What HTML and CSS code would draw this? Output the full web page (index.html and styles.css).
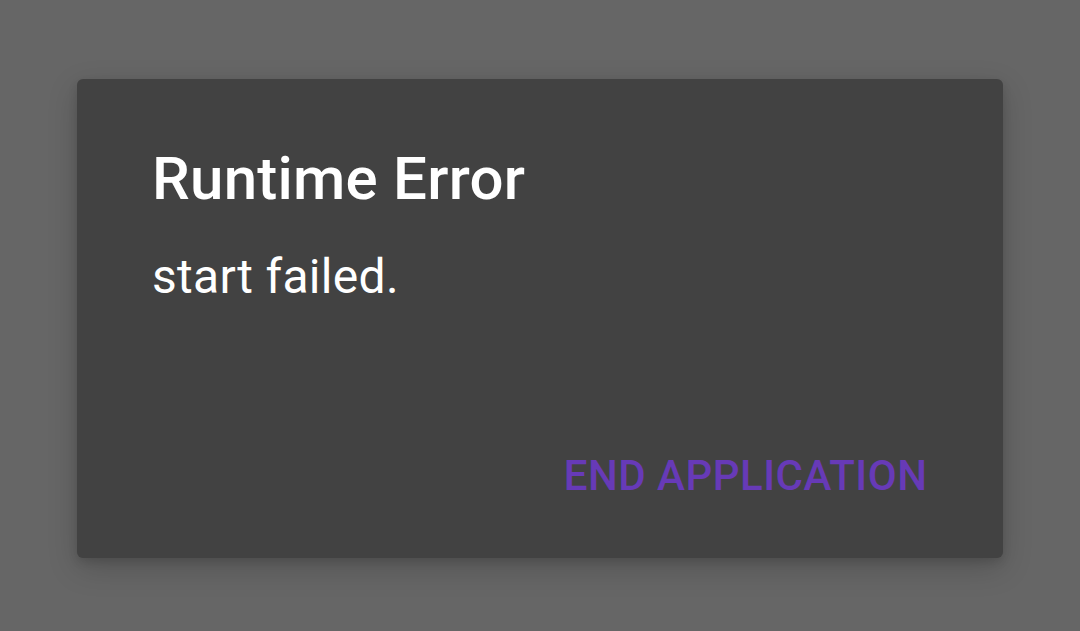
FILE: index.html
```
<!DOCTYPE html>
<html>
<head>
<meta charset="utf-8">
<link rel="stylesheet" href="styles.css">
</head>
<body>
<div class="screen">
  <div class="dialog">
    <h1 class="title">Runtime Error</h1>
    <p class="message">start failed.</p>
    <div class="actions">
      <button class="btn">END APPLICATION</button>
    </div>
  </div>
</div>
</body>
</html>
```
FILE: styles.css
```
html, body {
  margin: 0;
  padding: 0;
  background: #666666;
  width: 1080px;
  height: 631px;
  overflow: hidden;
}
.screen {
  box-sizing: border-box;
  width: 1080px;
  height: 631px;
  padding: 79px 77px 73px;
  display: flex;
  flex-direction: column;
  font-family: Roboto, "Noto Sans", sans-serif;
}
.dialog {
  flex: 1;
  background: #424242;
  border-radius: 6px;
  box-shadow: 0 10px 30px rgba(0, 0, 0, 0.18), 0 4px 10px rgba(0, 0, 0, 0.12);
  display: flex;
  flex-direction: column;
  padding: 69.5px 75px 60.6px 75px;
}
.title {
  margin: 0;
  font-size: 60px;
  font-weight: 500;
  line-height: 1;
  letter-spacing: 0.25px;
  color: #ffffff;
}
.message {
  margin: 44.6px 0 0;
  font-size: 48px;
  font-weight: 400;
  line-height: 1;
  letter-spacing: 0.3px;
  color: #ffffff;
}
.actions {
  margin-top: auto;
  display: flex;
  justify-content: flex-end;
}
.btn {
  background: none;
  border: 0;
  padding: 0 0.5px 0 0;
  font-family: Roboto, "Noto Sans", sans-serif;
  font-size: 42px;
  font-weight: 500;
  line-height: 1;
  letter-spacing: 0.5px;
  color: #673ab7;
}
```
